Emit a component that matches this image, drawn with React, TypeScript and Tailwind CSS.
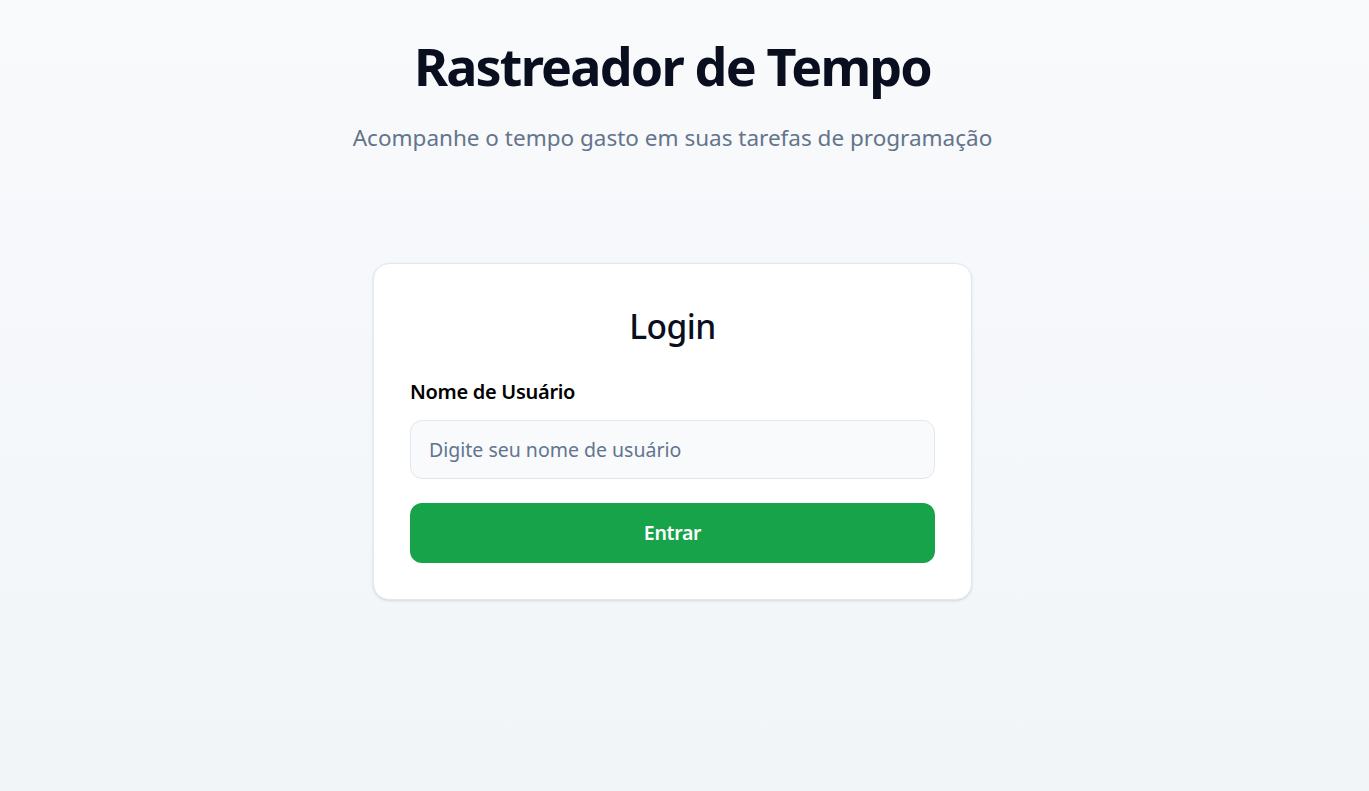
const font = { fontFamily: '"Noto Sans", "Open Sans", sans-serif' };

const App = () => {
  return (
    <div
      className="min-h-[791px] bg-linear-to-b from-[#f8fafc] to-[#f2f5f8] flex flex-col items-center pt-[28px] pr-[24px]"
      style={font}
    >
      <h1 className="text-[52px] leading-[76px] font-bold tracking-[-1.8px] text-[#0a0f1f]">Rastreador de Tempo</h1>
      <p className="mt-[20px] text-[22.5px] leading-[28px] text-[#64748b]">
        Acompanhe o tempo gasto em suas tarefas de programação
      </p>

      <div className="mt-[111px] w-[599px] rounded-2xl border border-slate-200 bg-white p-9 shadow-sm">
        <h2 className="text-center text-[33.5px] leading-[44px] font-medium tracking-[-0.5px] text-[#0a0f1f] mt-[4px]">Login</h2>

        <form className="mt-[30px] flex flex-col" onSubmit={(e) => e.preventDefault()}>
          <label className="text-[20px] leading-[28px] font-semibold text-black tracking-[-0.3px]">Nome de Usuário</label>
          <input
            type="text"
            placeholder="Digite seu nome de usuário"
            className="mt-[14px] h-[59px] rounded-xl border border-slate-200 bg-slate-50 px-[18px] text-[19.5px] text-slate-800 placeholder:text-slate-500 outline-none"
          />
          <button
            type="submit"
            className="mt-[24px] h-[60px] rounded-xl bg-[#16a34a] text-[19.5px] font-semibold text-white tracking-[-0.3px]"
          >
            Entrar
          </button>
        </form>
      </div>
    </div>
  );
};

export default App;
